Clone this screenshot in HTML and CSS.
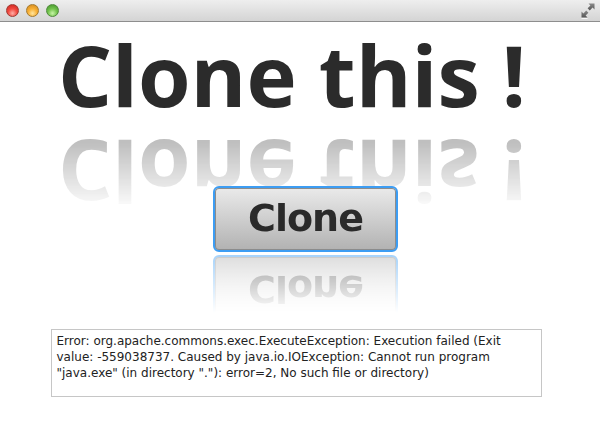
FILE: index.html
```html
<!DOCTYPE html>
<html>
<head>
<meta charset="utf-8">
<link rel="stylesheet" href="styles.css">
</head>
<body>
<div class="window">
  <div class="titlebar">
    <div class="lights">
      <span class="light red"></span>
      <span class="light yellow"></span>
      <span class="light green"></span>
    </div>
    <svg class="fullscreen" width="14" height="16" viewBox="0 0 14 16">
      <defs>
        <linearGradient id="fg" x1="0" y1="0" x2="0" y2="1">
          <stop offset="0" stop-color="#8a8a8a"/>
          <stop offset="1" stop-color="#555555"/>
        </linearGradient>
      </defs>
      <path d="M7.5 0.5 L13.5 0.5 L13.5 6.5 L11.6 4.6 L8.8 7.4 L6.6 5.2 L9.4 2.4 Z" fill="url(#fg)"/>
      <path d="M0.5 8.5 L0.5 14.5 L6.5 14.5 L4.6 12.6 L7.4 9.8 L5.2 7.6 L2.4 10.4 Z" fill="url(#fg)"/>
      <path d="M0.5 15.5 L6.5 15.5" stroke="#f6f6f6" stroke-width="1"/>
    </svg>
  </div>
  <div class="content">
    <h1 class="headline">Clone this !</h1>
    <button class="clone-btn">Clone</button>
    <div class="output">Error: org.apache.commons.exec.ExecuteException: Execution failed (Exit value: -559038737. Caused by java.io.IOException: Cannot run program "java.exe" (in directory "."): error=2, No such file or directory)</div>
  </div>
</div>
</body>
</html>
```
FILE: styles.css
```css
html, body {
  margin: 0;
  padding: 0;
  background: #ffffff;
}
.window {
  width: 600px;
  height: 422px;
  display: flex;
  flex-direction: column;
  overflow: hidden;
}
.titlebar {
  height: 21px;
  border-bottom: 1px solid #8e8e8e;
  background: linear-gradient(#eeeeee, #d4d4d4);
  display: flex;
  align-items: center;
  justify-content: space-between;
  padding: 0 5px 0 6px;
  flex: none;
}
.lights {
  display: flex;
  gap: 7px;
  margin-top: -1px;
}
.light {
  width: 13px;
  height: 13px;
  border-radius: 50%;
  box-sizing: border-box;
}
.red {
  background: radial-gradient(circle at 50% 75%, #ffb0a8 0%, #f24a40 45%, #c8201b 100%);
  border: 1px solid #9e3a33;
}
.yellow {
  background: radial-gradient(circle at 50% 75%, #ffe6a0 0%, #f8b034 45%, #cf841c 100%);
  border: 1px solid #a47a2e;
}
.green {
  background: radial-gradient(circle at 50% 75%, #c8f5a8 0%, #74c44e 45%, #3f9026 100%);
  border: 1px solid #4f8a3c;
}
.fullscreen {
  display: block;
}
.content {
  display: flex;
  flex-direction: column;
  align-items: center;
  flex: 1;
}
.headline {
  margin: 10px 16px 0 0;
  font-family: "Open Sans", sans-serif;
  font-weight: 700;
  font-size: 85px;
  line-height: 85px;
  color: #2b2b2b;
  -webkit-box-reflect: below 13px linear-gradient(to bottom, rgba(0,0,0,0) 5%, rgba(0,0,0,0.3) 85%);
}
.clone-btn {
  margin: 69px 0 0 11px;
  width: 185px;
  height: 66px;
  box-sizing: border-box;
  border: 2px solid #3d9df3;
  border-radius: 6px;
  background: linear-gradient(#eaeaea, #b2b2b2);
  box-shadow: inset 0 0 0 1px #8c8c8c;
  font-family: "DejaVu Sans", sans-serif;
  font-weight: bold;
  font-size: 38px;
  letter-spacing: -1px;
  color: #2a2a2a;
  padding: 0 0 2px 0;
  -webkit-box-reflect: below 3px linear-gradient(to bottom, rgba(0,0,0,0) 12%, rgba(0,0,0,0.45) 100%);
}
.output {
  margin: 77px 8px 0 0;
  width: 491px;
  height: 68px;
  box-sizing: border-box;
  border: 1px solid #c6c6c6;
  padding: 3px 5px;
  font-family: "DejaVu Sans", sans-serif;
  font-size: 12px;
  line-height: 16px;
  color: #222222;
}
```
